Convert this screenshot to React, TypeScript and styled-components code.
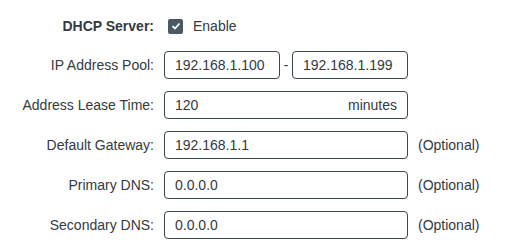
import * as React from 'react';
import styled, { createGlobalStyle } from 'styled-components';

const Global = createGlobalStyle`
	html, body {
		margin: 0;
		padding: 0;
		background: #fff;
	}
	body {
		font-family: "Liberation Sans", Arial, sans-serif;
		font-size: 14px;
		color: #333a40;
	}
`;

const Form = styled.div`
	display: flex;
	flex-direction: column;
	padding-top: 7px;
	width: 508px;
`;

const Row = styled.div<{ $short?: boolean }>`
	display: flex;
	align-items: center;
	height: ${(p) => (p.$short ? 38 : 40)}px;
`;

const Label = styled.div<{ $bold?: boolean }>`
	width: 154px;
	text-align: right;
	font-weight: ${(p) => (p.$bold ? 'bold' : 'normal')};
	margin-right: 10px;
	white-space: nowrap;
`;

const Box = styled.div<{ $width: number }>`
	box-sizing: border-box;
	display: flex;
	align-items: center;
	justify-content: space-between;
	width: ${(p) => p.$width}px;
	height: 28px;
	padding: 0 10px;
	border: 1.5px solid #3a454c;
	border-radius: 4px;
`;

const Dash = styled.span`
	width: 12px;
	text-align: center;
`;

const Hint = styled.span`
	margin-left: 10px;
`;

const Check = styled.span`
	display: inline-flex;
	align-items: center;
	justify-content: center;
	width: 15px;
	height: 15px;
	margin-left: 4px;
	border-radius: 2px;
	background: #4a5a63;
`;

const CheckText = styled.span`
	margin-left: 10px;
`;

const Field = ({ label, value, unit, width = 244, hint }: { label: string; value: string; unit?: string; width?: number; hint?: string }) => (
	<Row>
		<Label>{label}</Label>
		<Box $width={width}>
			<span>{value}</span>
			{unit && <span>{unit}</span>}
		</Box>
		{hint && <Hint>{hint}</Hint>}
	</Row>
);

export default function App() {
	return (
		<>
			<Global />
			<Form>
				<Row $short>
					<Label $bold>DHCP Server:</Label>
					<Check>
						<svg width="10" height="10" viewBox="0 0 10 10">
							<path d="M1.5 5.2 L4 7.5 L8.5 2.5" fill="none" stroke="#fff" strokeWidth="1.8" />
						</svg>
					</Check>
					<CheckText>Enable</CheckText>
				</Row>
				<Row>
					<Label>IP Address Pool:</Label>
					<Box $width={116}>
						<span>192.168.1.100</span>
					</Box>
					<Dash>-</Dash>
					<Box $width={116}>
						<span>192.168.1.199</span>
					</Box>
				</Row>
				<Field label="Address Lease Time:" value="120" unit="minutes" />
				<Field label="Default Gateway:" value="192.168.1.1" hint="(Optional)" />
				<Field label="Primary DNS:" value="0.0.0.0" hint="(Optional)" />
				<Field label="Secondary DNS:" value="0.0.0.0" hint="(Optional)" />
			</Form>
		</>
	);
}
